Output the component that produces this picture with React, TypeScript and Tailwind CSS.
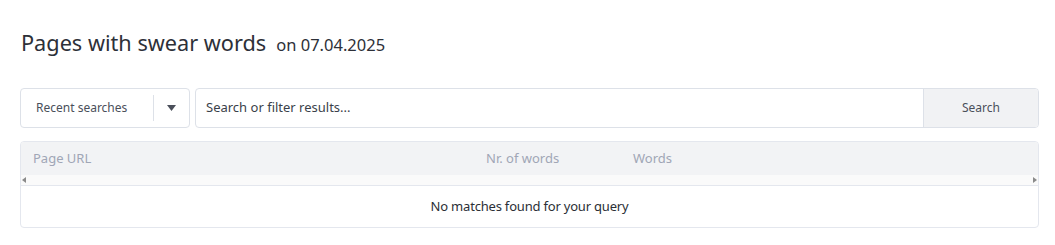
import React from 'react'

const App = () => {
  return (
    <div className="w-[1055px] h-[245px] bg-white pl-5 pr-4 pt-[27px] font-['Noto_Sans',sans-serif] text-[#2b2f36]">
      {/* Title */}
      <div className="flex items-baseline h-[31px] pl-px">
        <h1 className="text-[21.7px] leading-[31px] text-[#2d3038]">Pages with swear words</h1>
        <span className="ml-[10px] text-[16.5px] text-[#2d3038]">on 07.04.2025</span>
      </div>

      {/* Search row */}
      <div className="mt-[30px] flex gap-[5px] h-[40px]">
        <div className="w-[170px] flex items-center border border-[#dde1e8] rounded-[4px] bg-white">
          <span className="flex-1 pl-[15px] text-[12px] text-[#4a4f5a]">Recent searches</span>
          <div className="w-px h-[26px] bg-[#dde1e8]" />
          <div className="w-[35px] flex justify-center">
            <svg width="9" height="6" viewBox="0 0 9 6">
              <path d="M0 0h9L4.5 6z" fill="#4a4f5a" />
            </svg>
          </div>
        </div>
        <div className="flex-1 flex border border-[#dde1e8] rounded-[4px] overflow-hidden">
          <input
            className="flex-1 px-[10px] text-[13px] text-[#2b2f36] placeholder:text-[#3a3f4a] outline-none"
            placeholder="Search or filter results..."
          />
          <button className="w-[115px] bg-[#f1f2f4] border-l border-[#dde1e8] text-[12px] text-[#4a4f5a]">
            Search
          </button>
        </div>
      </div>

      {/* Table */}
      <div className="mt-[13px] border border-[#e4e7ee] rounded-[4px] overflow-hidden">
        <div className="flex h-[33px] items-center bg-[#f2f3f5] text-[13px] text-[#a0a6b6]">
          <div className="w-[465px] pl-[12px]">Page URL</div>
          <div className="w-[147px]">Nr. of words</div>
          <div>Words</div>
        </div>
        <div className="h-[11px] bg-[#fafafa] flex items-center justify-between px-[1px] border-b border-[#e4e7ee]">
          <svg width="4" height="6" viewBox="0 0 4 6">
            <path d="M4 0v6L0 3z" fill="#8a8a8a" />
          </svg>
          <svg width="4" height="6" viewBox="0 0 4 6">
            <path d="M0 0v6l4-3z" fill="#8a8a8a" />
          </svg>
        </div>
        <div className="h-[41px] flex items-center justify-center text-[13px] tracking-[-0.2px] text-[#2b2f36]">
          No matches found for your query
        </div>
      </div>
    </div>
  )
}

export default App
